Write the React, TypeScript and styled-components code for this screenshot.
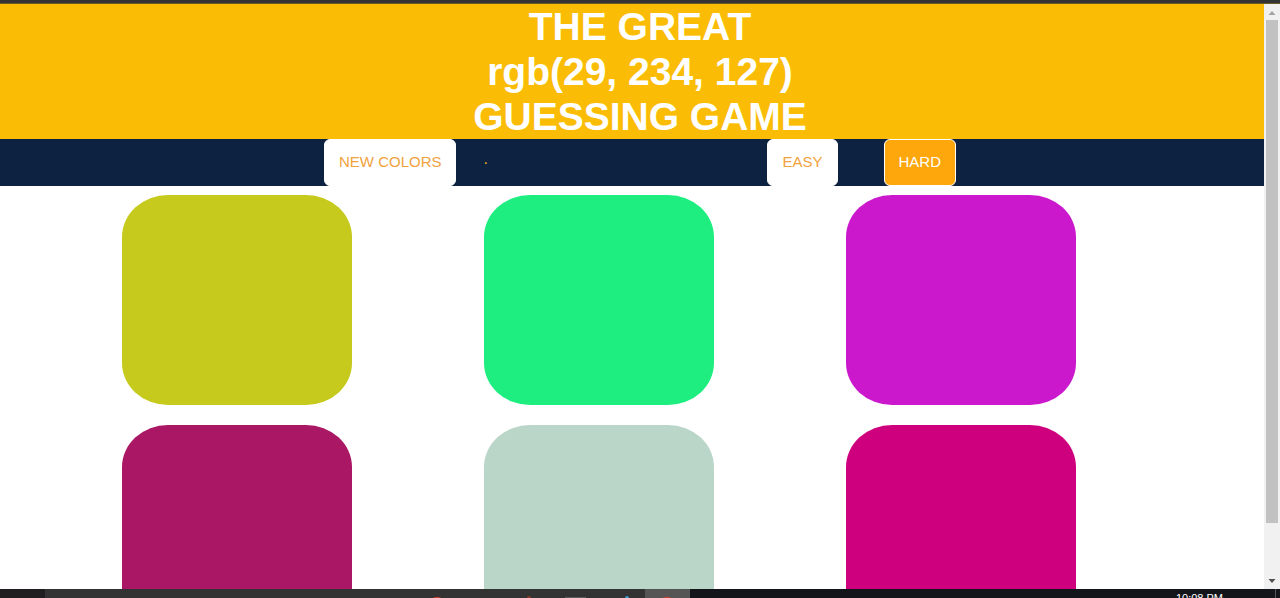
import React, { useState } from "react";
import styled, { createGlobalStyle } from "styled-components";

const GlobalStyle = createGlobalStyle`
  * { box-sizing: border-box; }
  body {
    margin: 0;
    background: #fff;
    font-family: "Liberation Sans", Arial, sans-serif;
  }
`;

const Screen = styled.div`
  display: flex;
  flex-direction: column;
  height: 100vh;
  overflow: hidden;
`;

const TopEdge = styled.div`
  flex: none;
  height: 4px;
  background: #343434;
  border-bottom: 1px solid #6b5a2a;
`;

const Viewport = styled.div`
  flex: 1;
  min-height: 0;
  display: flex;
`;

const Page = styled.main`
  flex: 1;
  min-width: 0;
  overflow: hidden;
`;

const Header = styled.header`
  padding-left: 16px;
  background: #fabc05;
  color: #fff;
  text-align: center;
`;

const Title = styled.h1`
  margin: 0;
  font-size: 39px;
  line-height: 45px;
  font-weight: 700;
`;

const TitleLine = styled.span`
  display: block;
`;

const Nav = styled.nav`
  display: flex;
  justify-content: center;
  align-items: stretch;
  height: 47px;
  padding-left: 16px;
  background: #0d2240;
`;

const NavButton = styled.button<{ $active?: boolean }>`
  padding: 0 14px 2px;
  border: 1px solid #fff;
  border-radius: 6px;
  background: ${(p) => (p.$active ? "#fea70c" : "#fff")};
  color: ${(p) => (p.$active ? "#fff" : "#f2a23c")};
  font-family: inherit;
  font-size: 15px;
  cursor: pointer;
`;

const Message = styled.span`
  width: 311px;
  padding-left: 27px;
  color: #e8a920;
  font-size: 16px;
  line-height: 40px;
`;

const Levels = styled.div`
  display: flex;
  gap: 46px;
`;

const Board = styled.section`
  display: grid;
  grid-template-columns: repeat(3, 230px);
  justify-content: space-between;
  row-gap: 20px;
  padding: 9px 188px 9px 122px;
`;

const Swatch = styled.button<{ $color: string }>`
  height: 210px;
  padding: 0;
  border: 0;
  border-radius: 20%;
  background: ${(p) => p.$color};
  cursor: pointer;
`;

const ScrollTrack = styled.div`
  flex: none;
  width: 16px;
  display: flex;
  flex-direction: column;
  align-items: center;
  background: #f1f1f1;
`;

const ScrollArrow = styled.svg`
  flex: none;
  width: 16px;
  height: 16px;
`;

const ScrollRail = styled.div`
  flex: 1;
  width: 12px;
`;

const ScrollThumb = styled.div`
  height: 91%;
  background: #c1c1c1;
`;

const Taskbar = styled.footer`
  flex: none;
  display: flex;
  height: 9px;
  overflow: hidden;
  background: #14151b;
`;

const StartArea = styled.div`
  width: 45px;
  background: #201e21;
`;

const AppArea = styled.div`
  width: 645px;
  background: #333;
`;

const AppIcons = styled.svg`
  display: block;
  width: 645px;
  height: 9px;
`;

const Clock = styled.time`
  margin-left: auto;
  padding: 3px 52px 0 0;
  color: #fff;
  font-size: 11px;
  line-height: 13px;
`;

const ShowDesktop = styled.div`
  width: 5px;
  border-left: 1px solid #55565b;
`;

const colors = [
  { name: "Olive", value: "#c6ca1d" },
  { name: "Green", value: "#1eee80" },
  { name: "Purple", value: "#cb18cc" },
  { name: "Plum", value: "#aa1764" },
  { name: "Sage", value: "#bad6c8" },
  { name: "Magenta", value: "#cf007e" },
];

export default function App() {
  const [level, setLevel] = useState("hard");
  return (
    <Screen>
      <GlobalStyle />
      <TopEdge />
      <Viewport>
        <Page>
          <Header>
            <Title>
              <TitleLine>THE GREAT</TitleLine>
              <TitleLine>rgb(29, 234, 127)</TitleLine>
              <TitleLine>GUESSING GAME</TitleLine>
            </Title>
          </Header>
          <Nav>
            <NavButton type="button">NEW COLORS</NavButton>
            <Message>.</Message>
            <Levels>
              <NavButton type="button" $active={level === "easy"} onClick={() => setLevel("easy")}>
                EASY
              </NavButton>
              <NavButton type="button" $active={level === "hard"} onClick={() => setLevel("hard")}>
                HARD
              </NavButton>
            </Levels>
          </Nav>
          <Board>
            {colors.map((c) => (
              <Swatch key={c.value} type="button" aria-label={c.name} $color={c.value} />
            ))}
          </Board>
        </Page>
        <ScrollTrack>
          <ScrollArrow viewBox="0 0 16 16" aria-hidden="true">
            <path d="M4.5 11 8 7l3.500 4z" fill="#a3a3a3" />
          </ScrollArrow>
          <ScrollRail>
            <ScrollThumb />
          </ScrollRail>
          <ScrollArrow viewBox="0 0 16 16" aria-hidden="true">
            <path d="M4.5 6 8 10 11.5 6z" fill="#505050" />
          </ScrollArrow>
        </ScrollTrack>
      </Viewport>
      <Taskbar>
        <StartArea />
        <AppArea>
          <AppIcons viewBox="45 0 645 9" aria-hidden="true">
            <rect x="645" y="0" width="45" height="9" fill="#555" />
            <circle cx="437" cy="17" r="9" fill="#d8402f" />
            <circle cx="667" cy="17" r="9" fill="#d8402f" />
            <circle cx="529" cy="9" r="2" fill="#8c3a2c" />
            <rect x="565" y="8" width="21" height="1" fill="#5c5c5c" />
            <circle cx="627" cy="9" r="2" fill="#3a9fd0" />
          </AppIcons>
        </AppArea>
        <Clock>10:08 PM</Clock>
        <ShowDesktop />
      </Taskbar>
    </Screen>
  );
}
